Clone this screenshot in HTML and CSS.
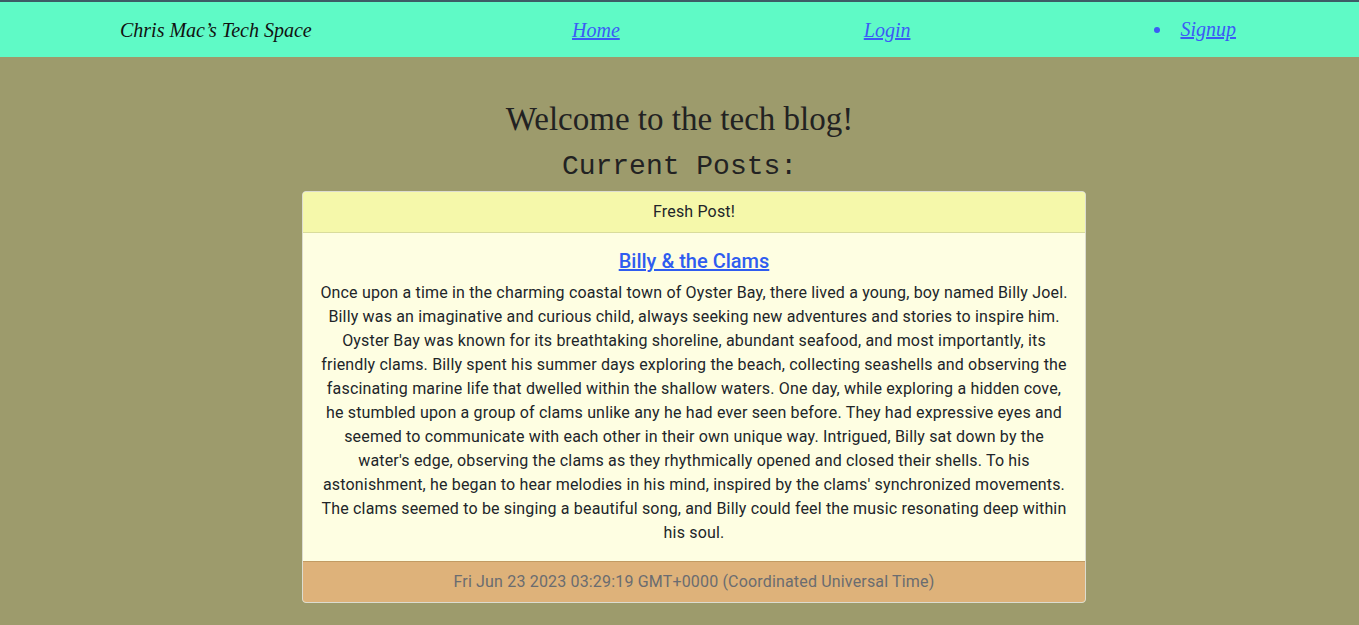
FILE: index.html
```html
<!DOCTYPE html>
<html lang="en">
<head>
<meta charset="utf-8">
<title>Chris Mac's Tech Space</title>
<link rel="stylesheet" href="styles.css">
</head>
<body>
<header class="topbar">
  <nav class="nav">
    <span class="brand">Chris Mac’s Tech Space</span>
    <a class="nav-link nav-home" href="#">Home</a>
    <a class="nav-link nav-login" href="#">Login</a>
    <ul class="nav-list">
      <li><a class="nav-link" href="#">Signup</a></li>
    </ul>
  </nav>
</header>
<main class="main">
  <h1 class="welcome">Welcome to the tech blog!</h1>
  <h2 class="posts-title">Current Posts:</h2>
  <section class="card">
    <div class="card-header">Fresh Post!</div>
    <div class="card-body">
      <h5 class="card-title"><a href="#">Billy &amp; the Clams</a></h5>
      <p class="card-text">Once upon a time in the charming coastal town of Oyster Bay, there lived a young, boy named Billy Joel. Billy was an imaginative and curious child, always seeking new adventures and stories to inspire him. Oyster Bay was known for its breathtaking shoreline, abundant seafood, and most importantly, its friendly clams. Billy spent his summer days exploring the beach, collecting seashells and observing the fascinating marine life that dwelled within the shallow waters. One day, while exploring a hidden cove, he stumbled upon a group of clams unlike any he had ever seen before. They had expressive eyes and seemed to communicate with each other in their own unique way. Intrigued, Billy sat down by the water's edge, observing the clams as they rhythmically opened and closed their shells. To his astonishment, he began to hear melodies in his mind, inspired by the clams' synchronized movements. The clams seemed to be singing a beautiful song, and Billy could feel the music resonating deep within his soul.</p>
    </div>
    <div class="card-footer">Fri Jun 23 2023 03:29:19 GMT+0000 (Coordinated Universal Time)</div>
  </section>
</main>
</body>
</html>
```
FILE: styles.css
```css
* { box-sizing: border-box; }
html, body { margin: 0; padding: 0; }
body {
  background: #9d9b6c;
  font-family: Roboto, "Liberation Sans", sans-serif;
  font-size: 16px;
  line-height: 24px;
  color: #212529;
  min-height: 625px;
}
.topbar {
  background: #5ffac6;
  border-top: 2px solid #3d5c66;
  height: 57px;
}
.nav {
  display: flex;
  align-items: center;
  height: 55px;
  padding-left: 120px;
  font-family: "Liberation Serif", serif;
  font-style: italic;
}
.brand {
  font-size: 20px;
  color: #111;
  width: 190px;
  white-space: nowrap;
}
.nav-link {
  color: #3b5bf5;
  font-size: 20px;
  text-decoration: underline;
}
.nav-home { margin-left: 262px; }
.nav-login { margin-left: 244px; }
.nav-list {
  margin: 0 0 0 263px;
  padding: 0;
  list-style: disc outside;
  color: #3b5bf5;
}
.nav-list li::marker { font-size: 20px; }
.nav-list li { padding-left: 7px; }
.main {
  display: flex;
  flex-direction: column;
  align-items: center;
  padding-top: 42px;
}
.welcome {
  margin: 0;
  font-family: "Liberation Serif", serif;
  font-weight: 400;
  font-size: 33px;
  line-height: 40px;
  color: #222;
}
.posts-title {
  margin: 12px 0 8px;
  font-family: "Liberation Mono", monospace;
  font-weight: 400;
  font-size: 28px;
  line-height: 32px;
  color: #222;
}
.card {
  width: 784px;
  margin-left: 29px;
  border: 1px solid #dcdcd0;
  border-radius: 4px;
  overflow: hidden;
  text-align: center;
  background: #fefee2;
  letter-spacing: 0.17px;
}
.card-header {
  background: #f5f8aa;
  padding: 8px 16px;
  border-bottom: 1px solid #d9dc9c;
}
.card-body { padding: 16px; }
.card-title {
  margin: 0 0 8px;
  font-size: 20px;
  line-height: 24px;
  font-weight: 500;
  letter-spacing: 0;
}
.card-title a { color: #2f5cf0; }
.card-text { margin: 0; }
.card-footer {
  background: #deb27a;
  color: #6a6c70;
  padding: 8px 16px;
  border-top: 1px solid #c29b63;
}
```
